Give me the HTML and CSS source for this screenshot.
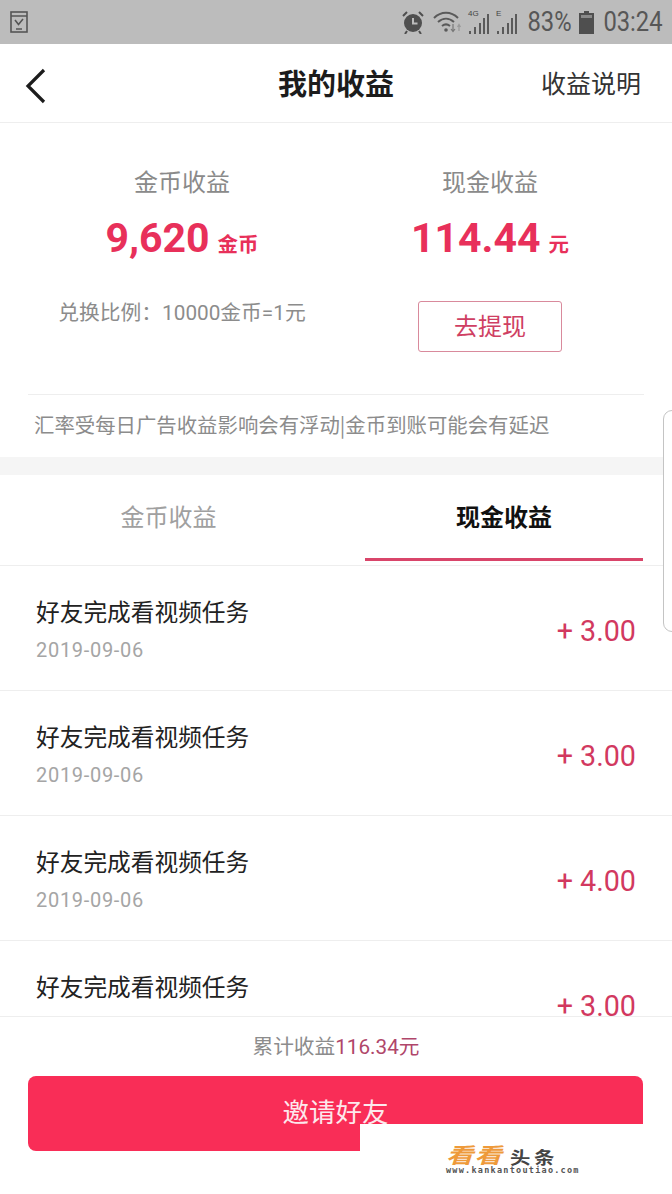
FILE: index.html
```html
<!DOCTYPE html>
<html lang="zh">
<head>
<meta charset="utf-8">
<title>我的收益</title>
<link rel="stylesheet" href="styles.css">
</head>
<body>
<div class="page">
  <div class="status">
    <svg class="st-left" width="18" height="22" viewBox="0 0 18 22"><rect x="1" y="1" width="16" height="20" fill="none" stroke="#555" stroke-width="1.600"/><path d="M1 5h16M6 18h6" stroke="#555" stroke-width="1.300"/><path d="M5 9l3.500 4.500L13 8" fill="none" stroke="#555" stroke-width="1.600"/></svg>
    <div class="st-right">
      <svg class="st-alarm" width="24" height="24" viewBox="0 0 24 24"><circle cx="12" cy="13" r="9" fill="#4f4f4f"/><path d="M12 8v5.500h4.500" fill="none" stroke="#bcbcbc" stroke-width="2"/><path d="M2 6l4-4M22 6l-4-4M6 21l-2 3M18 21l2 3" stroke="#4f4f4f" stroke-width="2"/></svg>
      <svg class="st-wifi" width="29" height="24" viewBox="0 0 29 24"><path d="M1 8c7-7 17-7 24 0M5 12c5-4.500 11-4.500 16 0M9 16c2.500-2 5.500-2 8 0" fill="none" stroke="#5a5a5a" stroke-width="2"/><circle cx="13" cy="20" r="1.800" fill="#5a5a5a"/><path d="M20 14v7M18 19l2 2.500 2-2.500" fill="none" stroke="#777" stroke-width="1.200"/><path d="M26 21v-6M24.500 17l1.500-2.500 1.500 2.500" fill="none" stroke="#999" stroke-width="1.200"/></svg>
      <span class="st-net st-g"><i>4G</i><svg width="22" height="20" viewBox="0 0 22 20"><path d="M2 20v-3M7 20v-7M12 20V9M16 20V4M20 20V0" stroke="#5a5a5a" stroke-width="2"/></svg></span>
      <span class="st-net st-e"><i>E</i><svg width="22" height="20" viewBox="0 0 22 20"><path d="M2 20v-3M7 20v-7M12 20V9M16 20V4M20 20V0" stroke="#5a5a5a" stroke-width="2"/></svg></span>
      <span class="st-text st-pct">83%</span>
      <svg class="st-batt" width="15" height="23" viewBox="0 0 15 23"><path d="M5 0h5v2h5v21H0V2h5z" fill="#4f4f4f"/><rect x="2" y="4" width="11" height="3" fill="#8a8a8a"/></svg>
      <span class="st-text st-time">03:24</span>
    </div>
  </div>

  <header class="nav">
    <svg class="back" width="24" height="36" viewBox="0 0 24 36"><path d="M20 2L4 18l16 16" fill="none" stroke="#1c1c1c" stroke-width="3.200"/></svg>
    <h1 class="nav-title">我的收益</h1>
    <span class="nav-link">收益说明</span>
  </header>

  <section class="summary">
    <div class="cols">
      <div class="col">
        <div class="label">金币收益</div>
        <div class="amount"><b>9,620</b><span>金币</span></div>
        <div class="rate">兑换比例：10000金币=1元</div>
      </div>
      <div class="col">
        <div class="label">现金收益</div>
        <div class="amount"><b>114.44</b><span>元</span></div>
        <div class="withdraw">去提现</div>
      </div>
    </div>
    <p class="notice">汇率受每日广告收益影响会有浮动|金币到账可能会有延迟</p>
  </section>

  <nav class="tabs">
    <div class="tab">金币收益</div>
    <div class="tab active">现金收益</div>
  </nav>

  <ul class="list">
    <li class="row"><div><div class="row-title">好友完成看视频任务</div><div class="row-date">2019-09-06</div></div><div class="row-val">+ 3.00</div></li>
    <li class="row"><div><div class="row-title">好友完成看视频任务</div><div class="row-date">2019-09-06</div></div><div class="row-val">+ 3.00</div></li>
    <li class="row"><div><div class="row-title">好友完成看视频任务</div><div class="row-date">2019-09-06</div></div><div class="row-val">+ 4.00</div></li>
    <li class="row"><div><div class="row-title">好友完成看视频任务</div><div class="row-date">2019-09-06</div></div><div class="row-val">+ 3.00</div></li>
  </ul>

  <footer class="foot">
    <div class="total">累计收益<span>116.34元</span></div>
    <div class="invite">邀请好友</div>
  </footer>

  <div class="handle"></div>
  <div class="wm">
    <div class="wm-top"><span class="wm-a">看看</span><span class="wm-b">头条</span></div>
    <div class="wm-url">www.kankantoutiao.com</div>
  </div>
</div>
</body>
</html>
```
FILE: styles.css
```css
* { box-sizing: border-box; }
html, body { margin: 0; padding: 0; }
body { font-family: "Noto Sans CJK SC", "Noto Sans", sans-serif; background: #fff; }
.page { position: relative; width: 672px; height: 1194px; overflow: hidden; background: #fff; }

.status { height: 44px; background: #bcbcbc; display: flex; align-items: center; justify-content: space-between; padding: 0 9px 0 10px; }
.st-right { display: flex; align-items: center; }
.st-alarm { margin-right: 8px; }
.st-wifi { margin-right: 6px; }
.st-net { position: relative; display: block; width: 22px; height: 24px; padding-top: 4px; }
.st-net svg { display: block; }
.st-net i { position: absolute; left: 0; top: -1px; font: normal 8px/10px "Liberation Sans", sans-serif; color: #444; }
.st-g { margin-right: 6px; }
.st-e { margin-right: 10px; }
.st-text { display: flex; justify-content: center; font-family: Roboto, sans-serif; font-size: 27px; line-height: 30px; color: #575757; white-space: nowrap; transform: scaleX(0.88); }
.st-pct { width: 43px; margin-right: 8px; }
.st-batt { margin-right: 9px; }
.st-time { width: 60px; }

.nav { height: 79px; border-bottom: 1px solid #eee; display: flex; align-items: center; justify-content: space-between; position: relative; padding: 0 31px 0 24px; }
.back { margin-top: 6px; }
.nav-title { position: absolute; left: 0; right: 0; margin: 0; text-align: center; font-size: 29px; line-height: 40px; font-weight: 700; color: #1c1c1c; top: 18px; }
.nav-link { font-size: 25px; line-height: 36px; color: #333; margin-top: -2px; }

.summary { height: 334px; padding: 40px 28px 0; }
.cols { display: grid; grid-template-columns: 308px 308px; height: 232px; border-bottom: 1px solid #eee; }
.col { display: flex; flex-direction: column; align-items: center; }
.label { font-size: 24px; line-height: 36px; color: #8a8a8a; }
.amount { display: flex; align-items: baseline; gap: 8px; margin-top: 14px; color: #e8305a; height: 50px; }
.amount b { font-family: Roboto, sans-serif; font-size: 41px; line-height: 50px; font-weight: 700; }
.amount span { font-size: 20.500px; font-weight: 700; }
.rate { font-size: 20.750px; line-height: 30px; color: #8c8c8c; margin-top: 35px; font-family: Roboto, "Noto Sans CJK SC", sans-serif; }
.withdraw { width: 144px; height: 51px; margin-top: 38px; border: 1px solid #d98a9c; border-radius: 3px; color: #cf3f63; font-size: 24px; line-height: 46px; text-align: center; }
.notice { margin: 11px 0 0 6px; font-size: 20.400px; line-height: 36px; color: #8c8c8c; white-space: nowrap; }

.tabs { border-top: 18px solid #f5f5f5; height: 109px; display: grid; grid-template-columns: 337px 306px; grid-template-rows: 86px; border-bottom: 1px solid #eee; }
.tab { font-size: 24px; line-height: 82px; text-align: center; color: #a0a0a0; }
.tab.active { color: #111; font-weight: 700; border-bottom: 3px solid #d9456a; margin-left: 28px; }

.list { list-style: none; margin: 0; padding: 0; }
.row { height: 125px; display: flex; justify-content: space-between; align-items: flex-start; padding: 27px 36px 0; border-bottom: 1px solid #eee; }
.row-title { font-size: 23.700px; line-height: 36px; color: #222; }
.row-date { font-family: Roboto, sans-serif; font-size: 20px; line-height: 28px; color: #a5a5a5; margin-top: 7px; letter-spacing: 0.700px; }
.row-val { font-family: Roboto, sans-serif; font-size: 28.700px; line-height: 36px; color: #d2395f; margin-top: 20px; }

.foot { position: absolute; left: 0; right: 0; top: 1016px; bottom: 0; background: #fff; border-top: 1px solid #eee; padding: 0 28px; }
.total { text-align: center; font-size: 20.700px; line-height: 30px; margin-top: 13px; color: #8c8c8c; }
.total span { color: #b0466a; font-family: Roboto, "Noto Sans CJK SC", sans-serif; }
.invite { margin-top: 14px; width: 615px; height: 75px; border-radius: 8px; background: #f92d57; color: #fde8ec; font-size: 26.500px; line-height: 70px; text-align: center; }

.handle { position: absolute; left: 663px; top: 410px; width: 20px; height: 222px; border: 1px solid #c4c4c4; border-radius: 9px; background: #fff; }

.wm { position: absolute; left: 360px; top: 1124px; right: 0; bottom: 0; background: #fff; padding: 20px 0 0 86px; }
.wm-top { display: flex; align-items: flex-start; height: 22px; }
.wm-a { display: block; width: 59px; font-size: 21px; line-height: 20px; font-weight: 700; font-style: italic; color: #ee9a3a; letter-spacing: 1px; white-space: nowrap; transform: scaleX(1.3); transform-origin: left center; }
.wm-b { display: block; width: 48px; font-size: 17px; line-height: 18px; font-weight: 700; color: #444; margin-left: 5px; letter-spacing: 3px; margin-top: 4px; white-space: nowrap; transform: scaleX(1.2); transform-origin: left center; }
.wm-url { font-family: "DejaVu Sans Mono", monospace; font-size: 8.500px; font-weight: 700; line-height: 9px; color: #555; letter-spacing: 1.250px; white-space: nowrap; }
```
